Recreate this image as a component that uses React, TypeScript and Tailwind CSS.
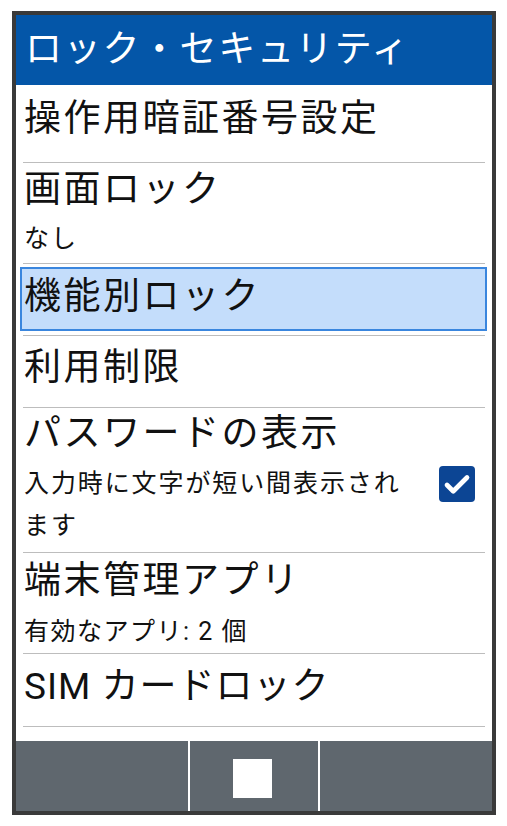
import { Check } from 'lucide-react'

const font = { fontFamily: 'Roboto, "Noto Sans CJK JP", sans-serif' }

function Divider() {
  return <div className="mx-[7px] h-px bg-[#bdbdbd]" />
}

function Title({ children }: { children: React.ReactNode }) {
  return <div className="text-[37px] leading-[44px] tracking-[2.5px] text-[#111] whitespace-nowrap">{children}</div>
}

function Sub({ children }: { children: React.ReactNode }) {
  return <div className="text-[25px] leading-[42px] tracking-[1.9px] text-[#111]">{children}</div>
}

export default function App() {
  return (
    <div className="w-[507px] h-[826px] bg-white overflow-hidden" style={font}>
      <div className="ml-[12px] mt-[11px] w-[484px] h-[804px] border-4 border-[#3a3a3a] flex flex-col bg-white">
        <div className="h-[70px] shrink-0 bg-[#0456a8] flex items-center pl-[9px] text-white text-[37px] leading-[44px] tracking-[1.8px]">
          ロック・セキュリティ
        </div>

        <div className="h-[77px] shrink-0 pl-[8px] pt-[12px]">
          <Title>操作用暗証番号設定</Title>
        </div>
        <Divider />

        <div className="h-[100px] shrink-0 pl-[8px] pt-[5px]">
          <Title>画面ロック</Title>
          <div className="mt-[6px]">
            <Sub>なし</Sub>
          </div>
        </div>
        <Divider />

        <div className="h-[71px] shrink-0 pt-[3px] pl-[4px] pr-[5px]">
          <div className="h-[64px] border-2 border-[#3a86de] bg-[#c4ddfb] pl-[2px] pt-[6px]">
            <Title>機能別ロック</Title>
          </div>
        </div>
        <Divider />

        <div className="h-[71px] shrink-0 pl-[8px] pt-[10px]">
          <Title>利用制限</Title>
        </div>
        <Divider />

        <div className="h-[144px] shrink-0 pl-[8px] pr-[17px] flex justify-between">
          <div className="pt-[4px]">
            <Title>パスワードの表示</Title>
            <div className="mt-[7px]">
              <Sub>
                入力時に文字が短い間表示され
                <br />
                ます
              </Sub>
            </div>
          </div>
          <div className="self-center mt-[8px] w-[36px] h-[36px] rounded-[4px] bg-[#0c4594] flex items-center justify-center">
            <Check className="text-white mt-[1px]" size={30} strokeWidth={3.75} />
          </div>
        </div>
        <Divider />

        <div className="h-[100px] shrink-0 pl-[8px] pt-[6px]">
          <Title>端末管理アプリ</Title>
          <div className="mt-[8px] text-[25px] leading-[42px] tracking-[1.5px] text-[#111]">
            有効なアプリ: 2 個
          </div>
        </div>
        <Divider />

        <div className="h-[72px] shrink-0 pl-[8px] pt-[11px]">
          <div className="text-[37px] leading-[44px] tracking-[1px] text-[#111] whitespace-nowrap">SIM カードロック</div>
        </div>
        <Divider />

        <div className="flex-1" />

        <div className="h-[70px] shrink-0 flex bg-[#5f676e]">
          <div className="w-[172px]" />
          <div className="w-[2px] bg-white" />
          <div className="w-[128px] flex items-center justify-center">
            <div className="w-[39px] h-[39px] bg-white mt-[5px] mr-[3px]" />
          </div>
          <div className="w-[2px] bg-white" />
          <div className="flex-1" />
        </div>
      </div>
    </div>
  )
}
